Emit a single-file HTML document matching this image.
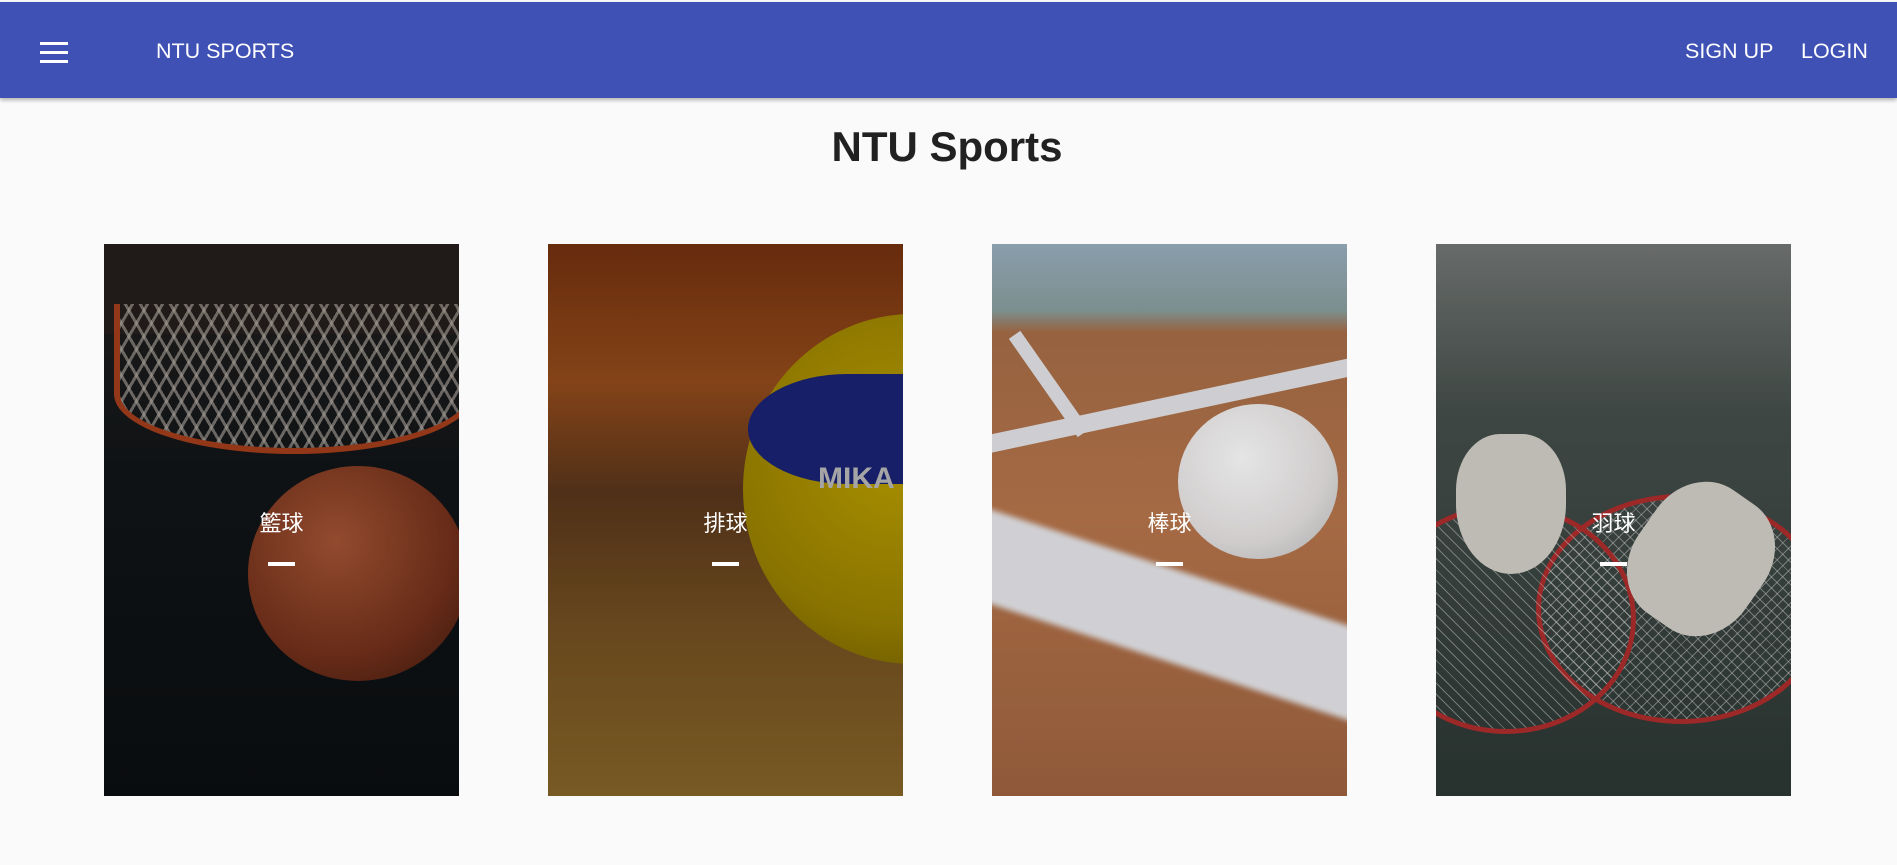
<!DOCTYPE html>
<html><head><meta charset="utf-8"><style>
*{margin:0;padding:0;box-sizing:border-box}
body{width:1897px;height:865px;background:#fafafa;font-family:"Liberation Sans","Noto Sans CJK TC",sans-serif;overflow:hidden;position:relative}
.bar{position:absolute;left:0;top:2px;width:1897px;height:96px;background:#3f51b5;box-shadow:0 2px 4px rgba(0,0,0,.3);color:#fff}
.ham{position:absolute;left:40px;top:40px;width:28px}
.ham i{display:block;height:3px;background:#fff;margin-bottom:6px}
.brand{position:absolute;left:156px;top:37px;font-size:21.5px}
.btn{position:absolute;top:37px;font-size:21.5px}
h1{position:absolute;left:0;width:1894px;text-align:center;top:123px;font-size:42px;color:#212121;font-weight:bold}
.card{position:absolute;top:244px;width:355px;height:552px;overflow:hidden}
.card .lbl{position:absolute;left:0;width:100%;text-align:center;color:#fff;font-size:22px}
.card .d{position:absolute;left:164px;width:27px;height:4px;background:#fff}
.ov{position:absolute;inset:0;background:rgba(0,0,0,.25)}
</style></head><body>
<div class="bar">
<div class="ham"><i></i><i></i><i></i></div>
<div class="brand">NTU SPORTS</div>
<div class="btn" style="left:1685px">SIGN UP</div>
<div class="btn" style="left:1801px">LOGIN</div>
</div>
<h1>NTU Sports</h1>

<div class="card" style="left:104px;background:linear-gradient(180deg,#2a2624 0,#15191c 40%,#0d1114 100%)">
<div style="position:absolute;left:-20px;top:0;width:400px;height:90px;background:#2b2420"></div>
<div style="position:absolute;left:10px;top:60px;width:360px;height:150px;border:6px solid #c44a22;border-top:none;border-radius:0 0 180px 180px/0 0 60px 60px;background:repeating-linear-gradient(60deg,transparent 0 10px,rgba(220,210,200,.6) 10px 13px),repeating-linear-gradient(-60deg,transparent 0 10px,rgba(220,210,200,.6) 10px 13px)"></div>
<div style="position:absolute;left:144px;top:222px;width:220px;height:215px;border-radius:50%;background:radial-gradient(circle at 40% 35%,#c3643e,#8a3a20 60%,#4a1e12)"></div>
<div class="ov"></div>
<div class="lbl" style="top:262px">籃球</div><div class="d" style="top:318px"></div>
</div>

<div class="card" style="left:548px;background:linear-gradient(180deg,#8a3a12 0,#b05a20 25%,#6b4020 45%,#8a6028 70%,#a07830 100%)">
<div style="position:absolute;left:195px;top:70px;width:340px;height:350px;border-radius:50%;background:radial-gradient(circle at 45% 40%,#e0c000,#b89a00 60%,#7a6400)"></div>
<div style="position:absolute;left:200px;top:130px;width:200px;height:110px;border-radius:50% 0 0 50%;background:#1e2a8a"></div>
<div style="position:absolute;left:270px;top:218px;color:#ddd;font-weight:bold;font-size:30px;font-family:'Liberation Sans'">MIKA</div>
<div class="ov"></div>
<div class="lbl" style="top:262px">排球</div><div class="d" style="top:318px"></div>
</div>

<div class="card" style="left:992px;background:linear-gradient(180deg,#9ab0c0 0,#8aa0a0 12%,#a86e48 16%,#b8764c 50%,#a06440 100%)">
<div style="position:absolute;left:-40px;top:330px;width:460px;height:90px;background:#e8e8ec;transform:rotate(18deg);filter:blur(3px)"></div>
<div style="position:absolute;left:-20px;top:150px;width:420px;height:18px;background:#e6e6ea;transform:rotate(-12deg)"></div>
<div style="position:absolute;left:50px;top:80px;width:14px;height:120px;background:#e6e6ea;transform:rotate(-35deg)"></div>
<div style="position:absolute;left:186px;top:160px;width:160px;height:155px;border-radius:50%;background:radial-gradient(circle at 40% 35%,#fff,#e8e4e4 60%,#bbb)"></div>
<div class="ov" style="background:rgba(0,0,0,.1)"></div>
<div class="lbl" style="top:262px">棒球</div><div class="d" style="top:318px"></div>
</div>

<div class="card" style="left:1436px;background:linear-gradient(180deg,#7a7e7c 0,#4a5450 30%,#2e3a36 100%)">
<div style="position:absolute;left:100px;top:250px;width:290px;height:230px;border-radius:50%;border:5px solid #b83030;background:repeating-linear-gradient(45deg,transparent 0 7px,rgba(220,220,220,.5) 7px 8px),repeating-linear-gradient(-45deg,transparent 0 7px,rgba(220,220,220,.5) 7px 8px)"></div>
<div style="position:absolute;left:-60px;top:260px;width:260px;height:230px;border-radius:50%;border:5px solid #b83030;background:repeating-linear-gradient(45deg,transparent 0 7px,rgba(220,220,220,.5) 7px 8px)"></div>
<div style="position:absolute;left:20px;top:190px;width:110px;height:140px;border-radius:40% 40% 50% 50%;background:#e0dcd4"></div>
<div style="position:absolute;left:200px;top:240px;width:130px;height:150px;border-radius:40%;background:#e0dcd4;transform:rotate(35deg)"></div>
<div class="ov" style="background:rgba(0,0,0,.15)"></div>
<div class="lbl" style="top:262px">羽球</div><div class="d" style="top:318px"></div>
</div>
</body></html>
